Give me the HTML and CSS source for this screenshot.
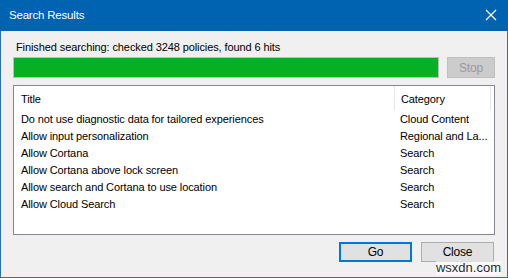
FILE: index.html
```html
<!DOCTYPE html>
<html lang="en">
<head>
  <meta charset="UTF-8" />
  <title>Search Results</title>
  <link rel="stylesheet" href="styles.css">
</head>
<body>
  <div class="window">
    <div class="titlebar">
      <span class="title">Search Results</span>
      <svg class="close-x" width="12" height="12" viewBox="0 0 12 12">
        <path d="M1 1 L11 11 M11 1 L1 11" stroke="#fff" stroke-width="1.2" fill="none"/>
      </svg>
    </div>
    <div class="content">
      <div class="status">Finished searching: checked 3248 policies, found 6 hits</div>
      <div class="progress-row">
        <div class="progress"><div class="fill"></div></div>
        <button class="btn disabled">Stop</button>
      </div>
      <div class="listbox">
        <div class="row header">
          <div class="col-title">Title</div>
          <div class="col-cat">Category</div>
        </div>
        <div class="row"><div class="col-title">Do not use diagnostic data for tailored experiences</div><div class="col-cat">Cloud Content</div></div>
        <div class="row"><div class="col-title">Allow input personalization</div><div class="col-cat">Regional and La...</div></div>
        <div class="row"><div class="col-title">Allow Cortana</div><div class="col-cat">Search</div></div>
        <div class="row"><div class="col-title">Allow Cortana above lock screen</div><div class="col-cat">Search</div></div>
        <div class="row"><div class="col-title">Allow search and Cortana to use location</div><div class="col-cat">Search</div></div>
        <div class="row"><div class="col-title">Allow Cloud Search</div><div class="col-cat">Search</div></div>
      </div>
      <div class="actions">
        <button class="btn default">Go</button>
        <button class="btn">Close</button>
      </div>
    </div>
    <span class="watermark">wsxdn.com</span>
  </div>
</body>
</html>
```

FILE: styles.css
```css
* {
  box-sizing: border-box;
}
body {
  margin: 0;
  font-family: 'Liberation Sans', Arial, sans-serif;
  font-size: 11px;
  letter-spacing: -0.1px;
  color: #000;
}
.window {
  position: relative;
  width: 508px;
  height: 278px;
  background: #f0f0f0;
  border: 1px solid #2a72b5;
  border-top: none;
  display: flex;
  flex-direction: column;
}
.titlebar {
  height: 31px;
  margin: 0 -1px;
  background: #0063b1;
  color: #fff;
  display: flex;
  align-items: center;
  justify-content: space-between;
  padding: 0 11px 1px 9px;
}
.title {
  font-size: 11.5px;
  letter-spacing: -0.2px;
}
.content {
  padding: 0 12px;
  display: flex;
  flex-direction: column;
}
.status {
  margin-top: 8px;
  padding-left: 3px;
  line-height: 16px;
  height: 16px;
}
.progress-row {
  margin-top: 2px;
  display: flex;
  gap: 8px;
}
.progress {
  flex: 1;
  height: 21px;
  background: #e6e6e6;
  border: 1px solid #bcbcbc;
}
.fill {
  width: 100%;
  height: 100%;
  background: #06b025;
}
.btn {
  font-family: inherit;
  font-size: 12px;
  letter-spacing: -0.2px;
  background: #e1e1e1;
  border: 1px solid #adadad;
  color: #000;
  padding: 0;
  height: 21px;
  width: 73px;
}
.btn.disabled {
  width: 48px;
  background: #cccccc;
  border-color: #bfbfbf;
  color: #9a9a9a;
}
.btn.default {
  border: 2px solid #0078d7;
}
.listbox {
  margin-top: 7px;
  height: 150px;
  background: #fff;
  border: 1px solid #828790;
}
.row {
  display: flex;
  height: 17px;
  line-height: 17px;
}
.row.header {
  height: 24px;
  line-height: 26px;
  margin-bottom: 1px;
}
.col-title {
  width: 380px;
  padding-left: 7px;
  white-space: nowrap;
  overflow: hidden;
}
.col-cat {
  width: 97px;
  padding-left: 6px;
  white-space: nowrap;
}
.header .col-cat {
  border-left: 1px solid #e5e5e5;
  border-right: 1px solid #e5e5e5;
}
.actions {
  margin-top: 7px;
  display: flex;
  justify-content: flex-end;
  gap: 9px;
  padding-right: 1px;
}
.actions .btn {
  height: 20px;
}
.watermark {
  position: absolute;
  right: 6px;
  bottom: 2px;
  font-size: 13px;
  letter-spacing: 0;
  color: #2a2a2a;
  background: rgba(255,255,255,0.6);
  line-height: 14px;
}
```
